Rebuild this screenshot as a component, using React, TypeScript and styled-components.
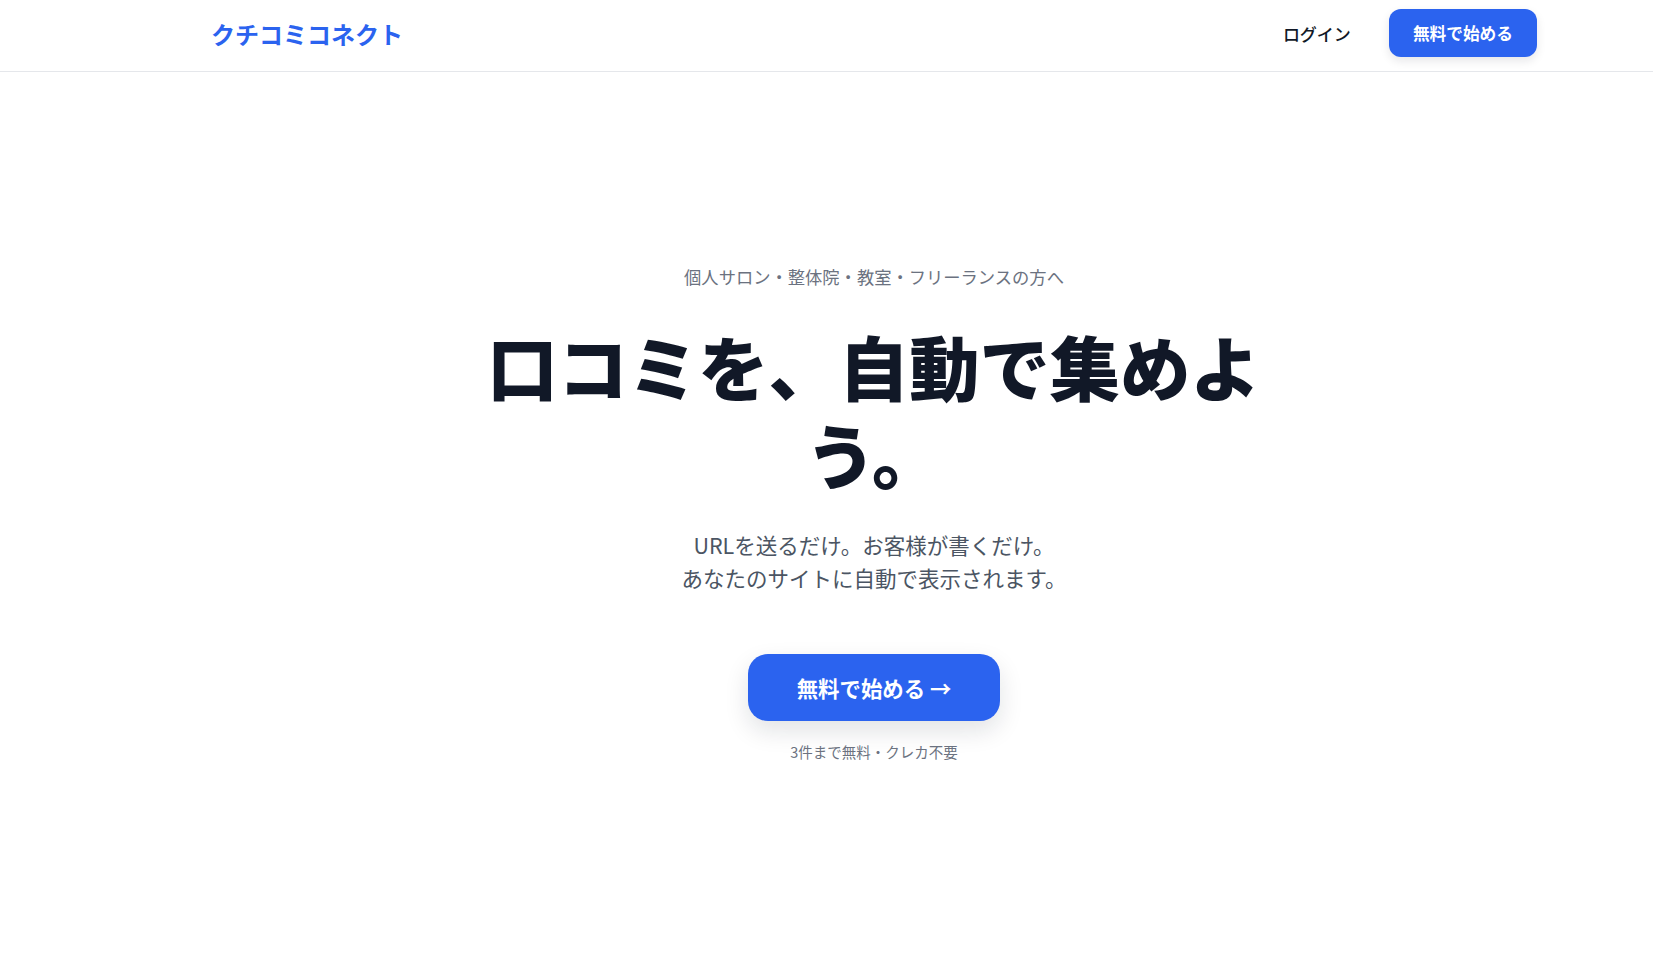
import React from "react";
import styled, { createGlobalStyle } from "styled-components";

const GlobalStyle = createGlobalStyle`
  html, body {
    margin: 0;
    padding: 0;
    background: #ffffff;
    overflow-x: hidden;
  }
  body {
    font-family: "Noto Sans CJK JP", "Noto Sans", sans-serif;
    color: #111827;
  }
  * {
    box-sizing: border-box;
  }
`;

const Page = styled.div`
  min-width: 1748px;
  min-height: 975px;
  background: #ffffff;
`;

const Header = styled.header`
  height: 72px;
  border-bottom: 1px solid #e5e7eb;
`;

const HeaderInner = styled.div`
  max-width: 1326px;
  margin: 0 auto;
  padding: 9px 0 14px;
  display: flex;
  align-items: center;
  justify-content: space-between;
`;

const Logo = styled.a`
  font-size: 24px;
  font-weight: 700;
  color: #2b63ef;
  text-decoration: none;
`;

const Nav = styled.nav`
  display: flex;
  align-items: center;
  gap: 38px;
`;

const NavLink = styled.a`
  font-size: 17px;
  font-weight: 500;
  color: #111827;
  text-decoration: none;
`;

const Button = styled.button<{ $size?: "sm" | "lg" }>`
  border: none;
  cursor: pointer;
  font-family: inherit;
  font-weight: 700;
  color: #ffffff;
  background: #2b63ef;
  display: inline-flex;
  align-items: center;
  justify-content: center;
  height: ${({ $size }) => ($size === "lg" ? "67px" : "48px")};
  padding: ${({ $size }) => ($size === "lg" ? "0 49px" : "0 24px")};
  font-size: ${({ $size }) => ($size === "lg" ? "21.4px" : "16.7px")};
  border-radius: ${({ $size }) => ($size === "lg" ? "20px" : "12px")};
  box-shadow: ${({ $size }) =>
    $size === "lg"
      ? "0 10px 24px rgba(17, 24, 39, 0.12)"
      : "0 4px 10px rgba(17, 24, 39, 0.1)"};
`;

const Hero = styled.main`
  padding-top: 190px;
  display: flex;
  flex-direction: column;
  align-items: center;
  text-align: center;
`;

const Eyebrow = styled.p`
  margin: 0;
  font-size: 17.3px;
  line-height: 30px;
  color: #6b7280;
`;

const Title = styled.h1`
  margin: 29px 0 0;
  max-width: 820px;
  font-size: 70.3px;
  line-height: 88px;
  font-weight: 900;
  color: #111827;
`;

const Lead = styled.p`
  margin: 31px 0 0;
  font-size: 21.5px;
  line-height: 33px;
  color: #4b5563;
`;

const CtaWrap = styled.div`
  margin-top: 60px;
`;

const Note = styled.p`
  margin: 20px 0 0;
  font-size: 14.5px;
  line-height: 22px;
  color: #6b7280;
`;

export default function App() {
  return (
    <>
      <GlobalStyle />
      <Page>
        <Header>
          <HeaderInner>
            <Logo href="#">クチコミコネクト</Logo>
            <Nav>
              <NavLink href="#">ログイン</NavLink>
              <Button $size="sm">無料で始める</Button>
            </Nav>
          </HeaderInner>
        </Header>
        <Hero>
          <Eyebrow>個人サロン・整体院・教室・フリーランスの方へ</Eyebrow>
          <Title>口コミを、自動で集めよう。</Title>
          <Lead>
            URLを送るだけ。お客様が書くだけ。
            <br />
            あなたのサイトに自動で表示されます。
          </Lead>
          <CtaWrap>
            <Button $size="lg">無料で始める →</Button>
          </CtaWrap>
          <Note>3件まで無料・クレカ不要</Note>
        </Hero>
      </Page>
    </>
  );
}
